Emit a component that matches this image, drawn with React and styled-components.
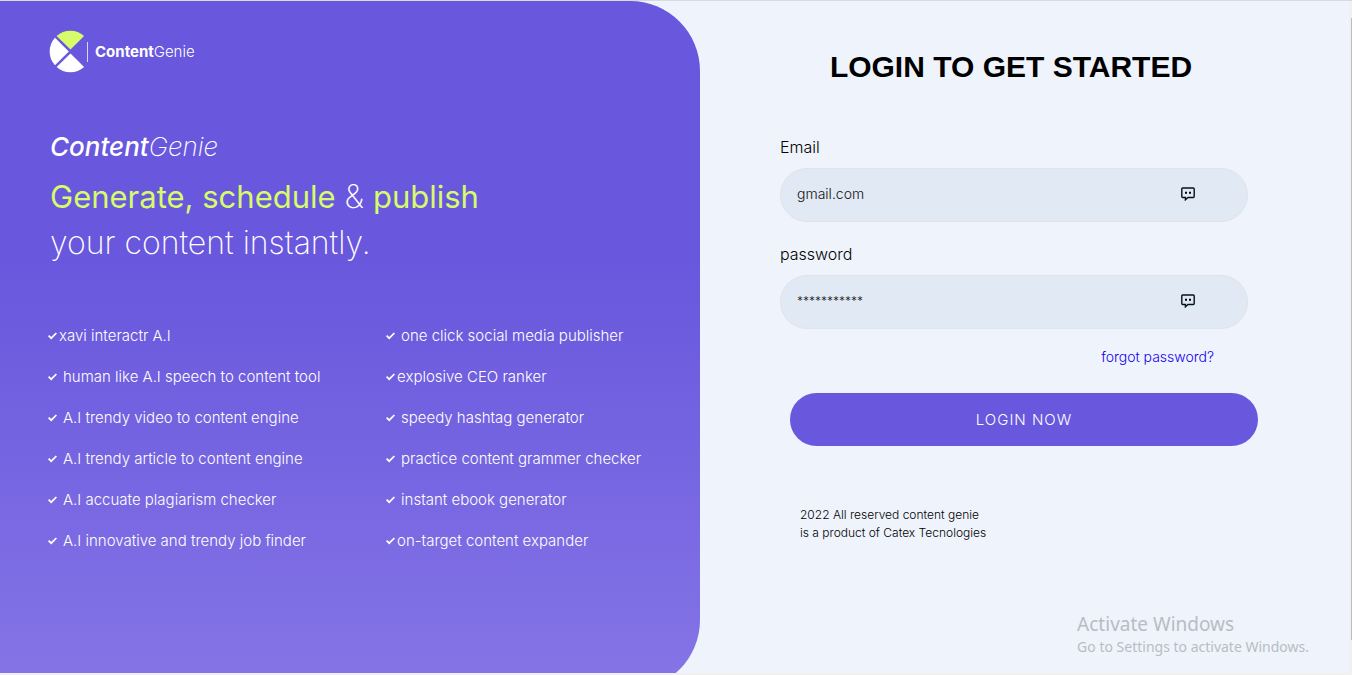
import React from "react";
import styled, { createGlobalStyle } from "styled-components";

const GlobalStyle = createGlobalStyle`
  *, *::before, *::after { box-sizing: border-box; }
  body {
    margin: 0;
    background: #eff3fc;
    color: #000;
    font-family: Inter, "Open Sans", sans-serif;
    font-weight: 300;
  }
`;

const Screen = styled.div`
  position: relative;
  height: 100vh;
  display: grid;
  grid-template-columns: 1fr 3px;
  grid-template-rows: 1fr 2px;
  border-top: 1px solid #d8dae0;
  background: #f0f0f0;
  overflow: hidden;
`;

const Page = styled.main`
  min-height: 0;
  display: grid;
  grid-template-columns: 700fr 649fr;
  background: #eff3fc;
  overflow: hidden;
`;

const ScrollTrack = styled.div`
  padding: 17px 0 33px 2px;
`;

const ScrollThumb = styled.div`
  height: 100%;
  background: #bcbcbc;
`;

const Promo = styled.section`
  height: calc(100% + 17px);
  padding: 30px 0 0 50px;
  border-radius: 0 70px 70px 0;
  background: linear-gradient(#6957dd 38%, #8575e6);
  color: #fff;
`;

const Brand = styled.div`
  display: flex;
  align-items: center;
  font-size: 15px;
  line-height: 20px;
`;

const BrandName = styled.span`
  margin-left: 4px;
  padding-left: 7px;
  border-left: 1px solid #d9d4f7;
  b { font-weight: 700; }
`;

const Tagline = styled.p`
  margin: 57px 0 9px;
  font-size: 26px;
  line-height: 36px;
  font-style: italic;
  font-weight: 200;
  b { font-weight: 500; }
`;

const Headline = styled.h2`
  margin: 0;
  font-size: 32px;
  line-height: 46px;
  font-weight: 200;
  white-space: nowrap;
  em {
    color: #d6fb6b;
    font-size: 31px;
    font-style: normal;
    font-weight: 400;
  }
`;

const Features = styled.div`
  display: grid;
  grid-template-columns: 14fr 13fr;
  margin: 49px 0 0 -2px;
`;

const FeatureList = styled.ul`
  margin: 0;
  padding: 0;
  list-style: none;
`;

const Feature = styled.li`
  display: flex;
  align-items: center;
  gap: ${(p) => (p.$tight ? 2 : 6)}px;
  font-size: 15px;
  line-height: 41px;
  white-space: nowrap;
`;

const Login = styled.form`
  padding: 48px 101px 0 80px;
`;

const Title = styled.h1`
  margin: 0 0 50px;
  padding-right: 6px;
  font-family: "Liberation Sans", Arial, sans-serif;
  font-size: 30px;
  line-height: 36px;
  font-weight: 700;
  text-align: center;
`;

const Field = styled.div`
  margin-bottom: 20px;
`;

const Label = styled.label`
  display: block;
  margin-bottom: 9px;
  font-size: 16px;
  line-height: 24px;
`;

const InputShell = styled.div`
  display: flex;
  align-items: center;
  height: 54px;
  padding: 0 52px 2px 16px;
  border: 1px solid #e0e4e8;
  border-radius: 27px;
  background: #e1e9f5;
`;

const Input = styled.input`
  flex: 1;
  min-width: 0;
  padding: 0;
  border: 0;
  outline: 0;
  background: transparent;
  color: #111;
  font: 300 14px/20px Inter, sans-serif;
  &::placeholder { color: #111; opacity: 1; }
  &[type="password"] { font-size: 12px; }
`;

const Forgot = styled.a`
  display: block;
  width: fit-content;
  margin: -2px 34px 26px auto;
  color: #1400f0;
  font-size: 14px;
  line-height: 20px;
  text-decoration: none;
`;

const Submit = styled.button`
  display: block;
  width: 100%;
  height: 53px;
  margin-left: 10px;
  padding: 0;
  border: 0;
  border-radius: 27px;
  background: #6957dd;
  color: #fff;
  font: 300 15px/24px Inter, sans-serif;
  letter-spacing: 1px;
`;

const Legal = styled.footer`
  margin: 60px 0 0 20px;
  font-size: 12px;
  line-height: 18px;
`;

const Watermark = styled.aside`
  position: absolute;
  right: 43px;
  bottom: 18px;
  color: #b9bcc3;
  font-family: "Noto Sans", "Open Sans", sans-serif;
  font-weight: 400;
  font-size: 14px;
  line-height: 20px;
  strong {
    display: block;
    font-size: 19px;
    line-height: 26px;
    font-weight: 400;
  }
`;

const Logo = () => (
  <svg width="33" height="41" viewBox="0 0 33 41" overflow="visible" aria-hidden="true">
    <path fill="#d6fb6b" d="M20.5 18.4 6.6 5A20.5 20.5 0 0 1 34.1 5Z" />
    <path fill="#fff" d="M18.8 20.5 5 34.3A20.5 20.5 0 0 1 5 6.7Z" />
    <path fill="#fff" d="M20.5 22.4 6.6 36A20.5 20.5 0 0 0 34.1 36Z" />
  </svg>
);

const Check = () => (
  <svg width="9" height="8" viewBox="0 0 9 8" fill="none" stroke="#fff" strokeWidth="1.7" aria-hidden="true">
    <path d="M.6 3.6 3.2 6.2 8.4 1" />
  </svg>
);

const ChatIcon = () => (
  <svg width="14" height="14" viewBox="0 0 14 14" fill="none" aria-hidden="true">
    <path d="M1.7 1H12.3Q13.2 1 13.2 1.9V9.6Q13.2 10.5 12.3 10.5H7L4.4 12.8V10.5H1.7Q.8 10.5 .8 9.6V1.9Q.8 1 1.7 1Z" stroke="#00141f" strokeWidth="1.4" />
    <path d="M4 4.8H6V6.8H4ZM8 4.8H10V6.8H8Z" fill="#000" />
  </svg>
);

const columns = [
  [
    ["xavi interactr A.I", true],
    ["human like A.I speech to content tool"],
    ["A.I trendy video to content engine"],
    ["A.I trendy article to content engine"],
    ["A.I accuate plagiarism checker"],
    ["A.I innovative and trendy job finder"],
  ],
  [
    ["one click social media publisher"],
    ["explosive CEO ranker", true],
    ["speedy hashtag generator"],
    ["practice content grammer checker"],
    ["instant ebook generator"],
    ["on-target content expander", true],
  ],
];

export default function App() {
  return (
    <>
      <GlobalStyle />
      <Screen>
        <Page>
          <Promo>
            <Brand>
              <Logo />
              <BrandName><b>Content</b>Genie</BrandName>
            </Brand>
            <Tagline><b>Content</b>Genie</Tagline>
            <Headline>
              <em>Generate, schedule</em> &amp; <em>publish</em>
              <br />
              your content instantly.
            </Headline>
            <Features>
              {columns.map((items, i) => (
                <FeatureList key={i}>
                  {items.map(([text, tight]) => (
                    <Feature key={text} $tight={tight}>
                      <Check />
                      {text}
                    </Feature>
                  ))}
                </FeatureList>
              ))}
            </Features>
          </Promo>
          <Login onSubmit={(e) => e.preventDefault()}>
            <Title>LOGIN TO GET STARTED</Title>
            <Field>
              <Label htmlFor="email">Email</Label>
              <InputShell>
                <Input id="email" type="text" placeholder="gmail.com" />
                <ChatIcon />
              </InputShell>
            </Field>
            <Field>
              <Label htmlFor="password">password</Label>
              <InputShell>
                <Input id="password" type="password" placeholder="***********" />
                <ChatIcon />
              </InputShell>
            </Field>
            <Forgot href="#forgot">forgot password?</Forgot>
            <Submit type="submit">LOGIN NOW</Submit>
            <Legal>
              2022 All reserved content genie
              <br />
              is a product of Catex Tecnologies
            </Legal>
          </Login>
        </Page>
        <ScrollTrack>
          <ScrollThumb />
        </ScrollTrack>
        <Watermark>
          <strong>Activate Windows</strong>
          Go to Settings to activate Windows.
        </Watermark>
      </Screen>
    </>
  );
}
